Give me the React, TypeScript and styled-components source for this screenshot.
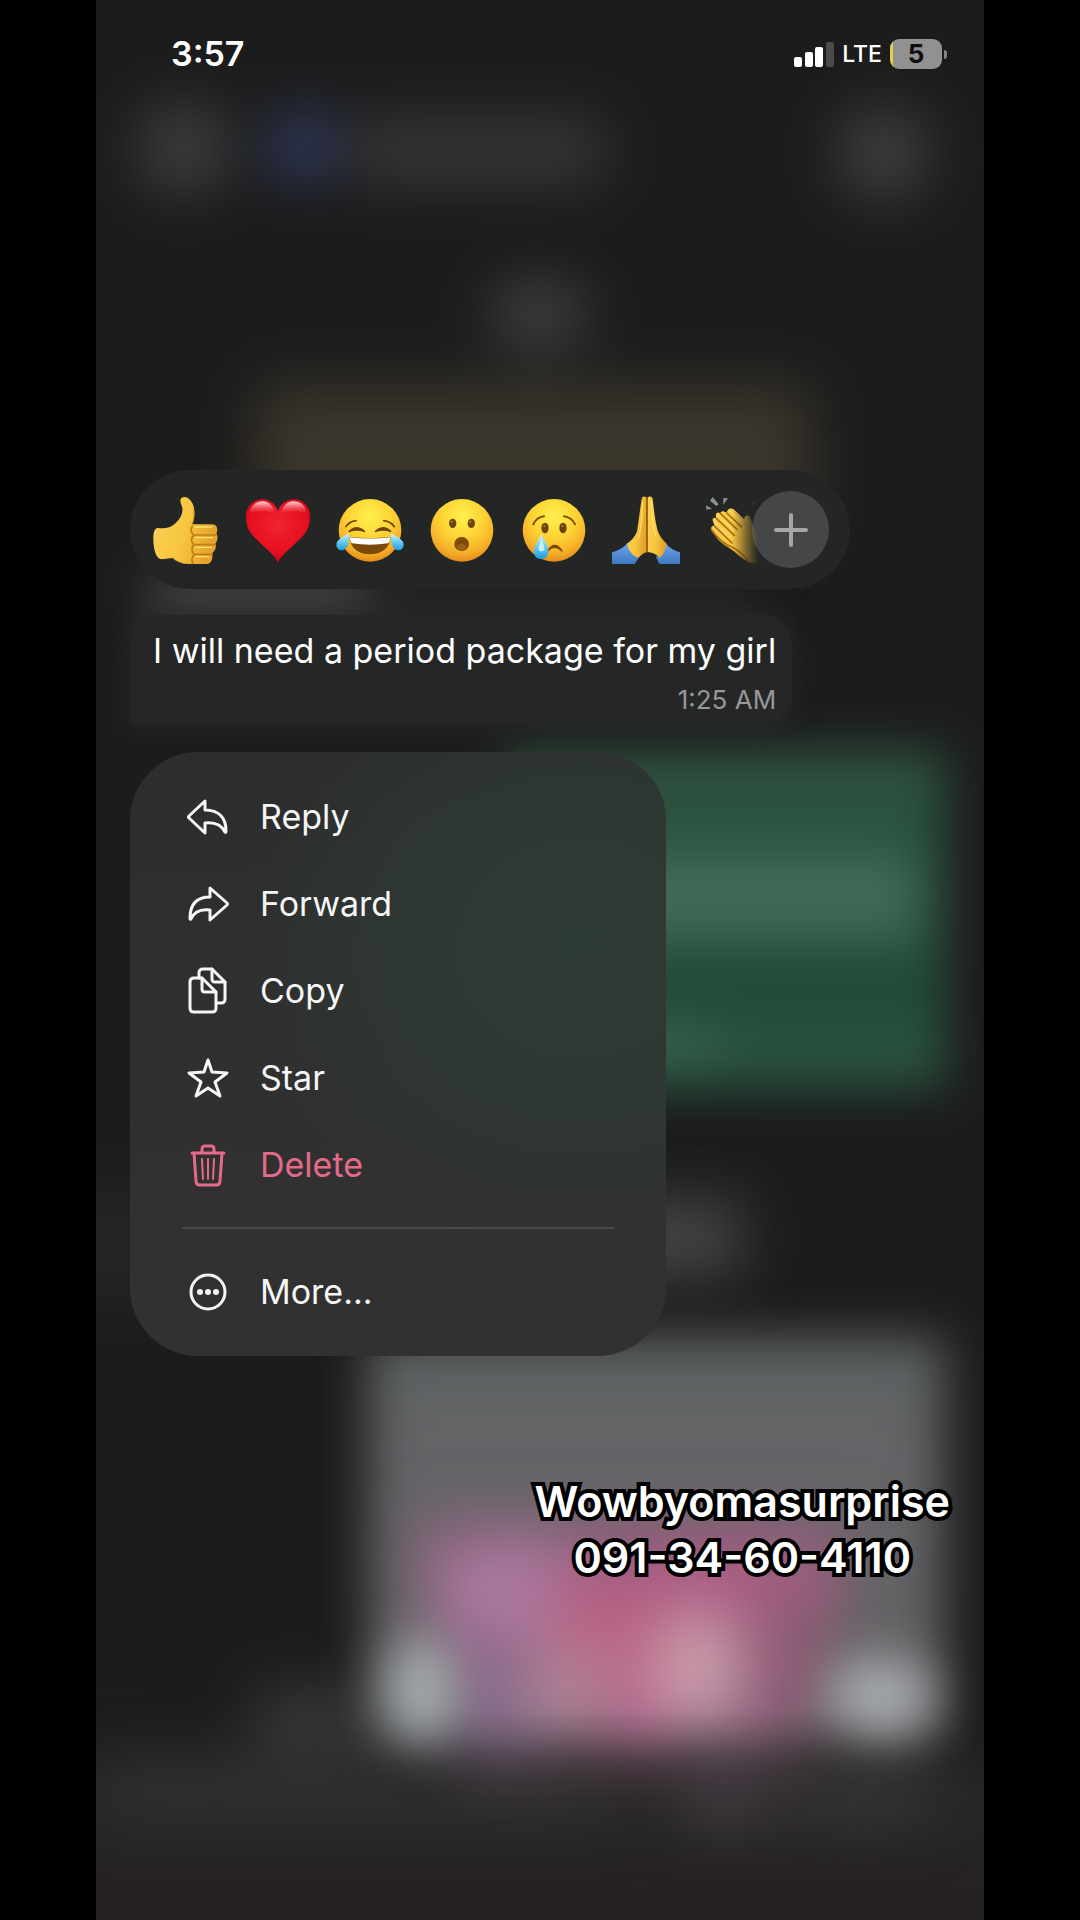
import React from "react";
import styled, { createGlobalStyle } from "styled-components";

const GlobalStyle = createGlobalStyle`
  * { box-sizing: border-box; }
  body {
    margin: 0;
    background: #000;
    color: #fff;
    font-family: Inter, "Liberation Sans", sans-serif;
  }
  button {
    appearance: none;
    border: 0;
    padding: 0;
    margin: 0;
    background: none;
    color: inherit;
    font: inherit;
    cursor: pointer;
  }
  p { margin: 0; }
`;

const Stage = styled.div`
  display: flex;
  justify-content: center;
  min-height: 100vh;
  background: #000;
`;

const Phone = styled.main`
  position: relative;
  isolation: isolate;
  display: flex;
  flex-direction: column;
  align-items: flex-start;
  width: 100%;
  max-width: 888px;
  min-height: 100vh;
  padding: 0 34px 80px;
  overflow: hidden;
  background: #1c1c1c;
`;

const Backdrop = styled.svg`
  position: absolute;
  inset: 0;
  z-index: -1;
  width: 100%;
  height: 100%;
`;

const StatusBar = styled.header`
  display: flex;
  align-items: center;
  justify-content: space-between;
  align-self: stretch;
  height: 108px;
  padding: 0 3px 0 41px;
`;

const Clock = styled.time`
  font-size: 34px;
  font-weight: 600;
  line-height: 40px;
`;

const Indicators = styled.div`
  display: flex;
  align-items: center;
  gap: 8px;
`;

const Network = styled.span`
  font-size: 23px;
  font-weight: 500;
  line-height: 30px;
`;

const Battery = styled.div`
  display: flex;
  align-items: center;
  gap: 2px;
`;

const BatteryBody = styled.div`
  display: grid;
  place-items: center;
  width: 52px;
  height: 30px;
  border-radius: 9px;
  background: linear-gradient(90deg, #e6cf48 3px, #919191 3px);
  color: #0c0c0c;
  font-size: 26px;
  font-weight: 700;
  line-height: 30px;
`;

const BatteryCap = styled.div`
  width: 3px;
  height: 9px;
  border-radius: 0 4px 4px 0;
  background: #858585;
`;

const ReactionBar = styled.div`
  display: flex;
  align-items: center;
  width: 100%;
  max-width: 720px;
  height: 119px;
  margin-top: 362px;
  padding: 0 21px 0 22px;
  border-radius: 60px;
  background: #232625;
`;

const ReactionList = styled.div`
  display: flex;
  flex: 1;
  gap: 24px;
  min-width: 0;
  overflow: hidden;
  mask-image: linear-gradient(90deg, #000 calc(100% - 28px), transparent calc(100% - 2px));
`;

const Reaction = styled.button`
  flex: none;
  width: 68px;
  height: 68px;

  svg {
    display: block;
    width: 68px;
    height: 68px;
  }
`;

const AddReaction = styled.button`
  display: grid;
  flex: none;
  place-items: center;
  width: 77px;
  height: 77px;
  margin-left: -8px;
  border-radius: 50%;
  background: #454648;
`;

const Bubble = styled.article`
  margin-top: 26px;
  padding: 12px 16px 10px 23px;
  border-radius: 30px 30px 30px 4px;
  background: #252727;
  box-shadow: 0 0 24px 6px rgba(40, 41, 41, 0.7);
`;

const MessageText = styled.p`
  font-size: 34px;
  line-height: 48px;
  white-space: nowrap;
`;

const MessageTime = styled.time`
  display: block;
  margin-top: 10px;
  color: #979898;
  font-size: 26px;
  line-height: 30px;
  text-align: right;
`;

const Menu = styled.nav`
  display: flex;
  flex-direction: column;
  width: 100%;
  max-width: 536px;
  margin-top: 27px;
  padding: 21px 0;
  border-radius: 68px;
  background:
    radial-gradient(ellipse 64% 50% at 84% 32%, #2f3c35 0%, rgba(46, 57, 52, 0.9) 45%, rgba(46, 52, 50, 0) 100%),
    linear-gradient(180deg, #2c2d2d, #313131 80%);
`;

const MenuItem = styled.button<{ $danger?: boolean }>`
  display: flex;
  align-items: center;
  gap: 29px;
  height: 87px;
  padding: 0 55px;
  color: ${(p) => (p.$danger ? "#e56a8a" : "#f6f6f6")};
  font-size: 34px;
  line-height: 44px;
  text-align: left;

  svg {
    flex: none;
    width: 46px;
    height: 48px;
    fill: none;
    stroke: currentColor;
    stroke-width: 3;
    stroke-linecap: round;
    stroke-linejoin: round;
  }
`;

const Divider = styled.hr`
  align-self: stretch;
  height: 2px;
  margin: 19px 52px;
  border: 0;
  background: #4a4a4a;
`;

const Caption = styled.p`
  align-self: flex-end;
  margin-top: 117px;
  color: #fff;
  font-size: 43px;
  font-weight: 600;
  line-height: 56px;
  text-align: center;
  paint-order: stroke fill;
  -webkit-text-stroke: 8px #000;
  stroke-linejoin: round;
`;

function BlurredChat() {
  return (
    <Backdrop viewBox="0 0 888 1920" preserveAspectRatio="xMidYMin slice" aria-hidden="true">
      <defs>
        <filter id="soft" x="-100%" y="-100%" width="300%" height="300%" colorInterpolationFilters="sRGB">
          <feGaussianBlur stdDeviation="24" />
        </filter>
        <filter id="wide" x="-100%" y="-100%" width="300%" height="300%" colorInterpolationFilters="sRGB">
          <feGaussianBlur stdDeviation="29" />
        </filter>
        <linearGradient id="floor" x1="0" y1="0" x2="0" y2="1">
          <stop offset="0" stopColor="#1c1c1c" stopOpacity="0" />
          <stop offset="0.45" stopColor="#282728" />
          <stop offset="1" stopColor="#252022" />
        </linearGradient>
        <linearGradient id="photo" x1="0" y1="0" x2="0" y2="1">
          <stop offset="0" stopColor="#5e6263" />
          <stop offset="0.4" stopColor="#656568" />
          <stop offset="1" stopColor="#606061" />
        </linearGradient>
      </defs>
      <rect width="888" height="1920" fill="#1c1c1c" />
      <rect y="1680" width="888" height="240" fill="url(#floor)" />

      <g filter="url(#wide)">
        <circle cx="88" cy="148" r="46" fill="#3f3f3f" />
        <circle cx="207" cy="146" r="36" fill="#313b62" />
        <rect x="255" y="118" width="255" height="66" rx="20" fill="#373737" />
        <circle cx="787" cy="153" r="46" fill="#404040" />
        <ellipse cx="443" cy="314" rx="50" ry="32" fill="#444" />
        <rect x="160" y="385" width="555" height="150" rx="16" fill="#3c372d" />
      </g>
      <g filter="url(#soft)">
        <rect x="52" y="575" width="220" height="50" fill="#484848" />
        <rect x="270" y="590" width="390" height="30" fill="#302b2b" />
      </g>

      <g filter="url(#soft)">
        <rect x="410" y="750" width="440" height="340" rx="10" fill="#2a523f" />
        <rect x="410" y="750" width="425" height="44" fill="#30533f" />
        <rect x="490" y="855" width="330" height="80" fill="#416b56" />
        <rect x="430" y="965" width="410" height="50" fill="#204a35" />
        <rect x="450" y="1028" width="170" height="34" fill="#3a644e" />
      </g>

      <g filter="url(#wide)">
        <rect x="380" y="1200" width="265" height="76" fill="#464646" />
        <rect x="-30" y="1190" width="90" height="110" fill="#262626" />
        <rect x="160" y="1690" width="110" height="60" fill="#3a3a3a" />
        <rect x="10" y="1765" width="500" height="54" fill="#303030" />
        <rect x="590" y="1760" width="80" height="64" fill="#413e42" />
        <rect x="700" y="1765" width="130" height="56" fill="#373638" />
      </g>

      <rect x="272" y="1338" width="576" height="404" rx="8" fill="url(#photo)" filter="url(#soft)" />
      <g filter="url(#wide)">
        <path d="M320 1522 H745 Q750 1620 690 1745 H360 Q335 1640 320 1522Z" fill="#92607f" />
        <ellipse cx="418" cy="1590" rx="84" ry="50" fill="#ab7a9f" />
        <ellipse cx="600" cy="1590" rx="145" ry="46" fill="#ad5c82" />
        <ellipse cx="510" cy="1640" rx="66" ry="42" fill="#ba6482" />
        <ellipse cx="405" cy="1700" rx="48" ry="58" fill="#866b8d" />
        <ellipse cx="690" cy="1660" rx="44" ry="78" fill="#8e5b75" />
        <ellipse cx="470" cy="1690" rx="42" ry="42" fill="#b28797" />
        <ellipse cx="545" cy="1712" rx="26" ry="40" fill="#c06a93" />
        <ellipse cx="603" cy="1668" rx="46" ry="60" fill="#c99dac" />
      </g>
      <g filter="url(#soft)">
        <ellipse cx="326" cy="1690" rx="34" ry="54" fill="#a8b0b2" />
        <ellipse cx="784" cy="1696" rx="54" ry="40" fill="#a7aaad" />
      </g>
      <rect x="360" y="1755" width="380" height="40" fill="#40363c" opacity="0.5" filter="url(#wide)" />
    </Backdrop>
  );
}

const SharedDefs = styled.svg`
  position: absolute;
  width: 0;
  height: 0;
`;

function EmojiDefs() {
  return (
    <SharedDefs aria-hidden="true">
      <defs>
        <radialGradient id="face" cx="0.5" cy="0.28" r="0.74">
          <stop offset="0" stopColor="#fff04f" />
          <stop offset="0.45" stopColor="#fdd535" />
          <stop offset="0.8" stopColor="#f6ae28" />
          <stop offset="1" stopColor="#df8716" />
        </radialGradient>
        <linearGradient id="skin" x1="0" y1="0" x2="1" y2="0.3">
          <stop offset="0" stopColor="#fdd257" />
          <stop offset="0.6" stopColor="#f7c53f" />
          <stop offset="1" stopColor="#e6a42c" />
        </linearGradient>
        <radialGradient id="heart" cx="0.5" cy="0.4" r="0.62">
          <stop offset="0" stopColor="#f02431" />
          <stop offset="0.7" stopColor="#e60f20" />
          <stop offset="1" stopColor="#c50415" />
        </radialGradient>
        <linearGradient id="gloss" x1="0" y1="0" x2="0" y2="1">
          <stop offset="0" stopColor="#fff" stopOpacity="0.85" />
          <stop offset="1" stopColor="#ff5a66" stopOpacity="0" />
        </linearGradient>
        <linearGradient id="tear" x1="0" y1="0" x2="0" y2="1">
          <stop offset="0" stopColor="#d4f6ff" />
          <stop offset="0.5" stopColor="#67cdf2" />
          <stop offset="1" stopColor="#2399d9" />
        </linearGradient>
        <linearGradient id="sleeve" x1="0" y1="0" x2="0" y2="1">
          <stop offset="0" stopColor="#6ba4e6" />
          <stop offset="1" stopColor="#3f78c4" />
        </linearGradient>
      </defs>
    </SharedDefs>
  );
}

function ThumbsUp() {
  return (
    <svg viewBox="96 105 204 204">
      <path d="M100 234 C100 212 105 200 114 201 C132 204 152 201 163 190 C178 176 190 160 187 140 C185 130 181 127 181 119 C181 107 195 105 205 112 C219 123 224 139 223 158 C223 171 219 181 217 190 H278 C292 191 295 207 289 218 C296 226 292 241 286 248 C290 257 287 268 277 276 C279 299 272 308 260 309 H217 C194 310 176 305 158 291 L125 295 C108 295 100 263 100 234Z" fill="url(#skin)" />
      <path d="M218 194 C211 204 211 215 222 222 C211 231 214 246 222 251 C213 259 214 274 223 280 C213 289 214 304 221 308" fill="none" stroke="#bf7c14" strokeWidth="5" />
      <path d="M222 222 H288 M222 251 H285 M223 280 H276" fill="none" stroke="#c17f18" strokeWidth="5" strokeLinecap="round" />
      <path d="M226 198 H276 M228 230 H278 M228 259 H275 M228 287 H266" fill="none" stroke="#ffe073" strokeWidth="4" strokeLinecap="round" />
      <path d="M158 291 C176 305 194 310 217 309 M217 188 C222 174 223 160 221 148" fill="none" stroke="#d99a28" strokeWidth="3" />
    </svg>
  );
}

function Heart() {
  return (
    <svg viewBox="371 105 204 204">
      <path d="M473 305 C462 281 430 258 402 229 C382 208 376 187 377 164 C379 132 402 114 427 115 C450 116 466 131 473 150 C480 131 496 116 519 115 C545 114 567 132 569 164 C570 187 564 208 544 229 C516 258 484 281 473 305Z" fill="url(#heart)" />
      <path d="M387 160 C390 132 408 121 427 121 C447 122 460 137 464 158 C450 149 400 147 387 160Z" fill="url(#gloss)" />
      <path d="M482 158 C486 137 499 122 519 121 C540 121 556 133 560 160 C545 147 496 149 482 158Z" fill="url(#gloss)" />
    </svg>
  );
}

function TearsOfJoy() {
  return (
    <svg viewBox="648 105 204 204">
      <circle cx="750" cy="208" r="94" fill="url(#face)" />
      <path d="M678 197 Q688 181 708 179 M823 197 Q812 181 791 179" fill="none" stroke="#6e4306" strokeWidth="5" strokeLinecap="round" />
      <path d="M688 211 Q709 190 733 211 Q709 203 688 211Z M767 211 Q791 190 812 211 Q791 203 767 211Z" fill="#6e4306" stroke="#6e4306" strokeWidth="5" strokeLinejoin="round" />
      <path d="M688 228 Q750 235 812 228 C809 262 784 280 750 280 C716 280 691 262 688 228Z" fill="#7b4a0a" />
      <path d="M689 229 Q750 236 811 229 Q810 244 804 247 Q750 255 696 247 Q690 243 689 229Z" fill="#fff" />
      <path d="M686 217 C690 245 681 268 664 268 C650 267 645 250 653 240 C660 231 674 226 686 217Z" fill="url(#tear)" />
      <path d="M814 217 C810 245 819 268 836 268 C850 267 855 250 847 240 C840 231 826 226 814 217Z" fill="url(#tear)" />
    </svg>
  );
}

function Surprised() {
  return (
    <svg viewBox="924 105 204 204">
      <circle cx="1026" cy="208" r="94" fill="url(#face)" />
      <ellipse cx="998" cy="187" rx="11" ry="14" fill="#70450c" />
      <ellipse cx="1054" cy="187" rx="11" ry="14" fill="#70450c" />
      <circle cx="995" cy="182" r="3" fill="#b0853e" />
      <circle cx="1051" cy="182" r="3" fill="#b0853e" />
      <ellipse cx="1025" cy="249" rx="22" ry="21" fill="#7c4c0d" />
      <path d="M1009 255 Q1025 240 1041 255 Q1036 268 1025 268 Q1014 268 1009 255Z" fill="#986014" />
    </svg>
  );
}

function Crying() {
  return (
    <svg viewBox="90 105 204 204">
      <circle cx="192" cy="208" r="94" fill="url(#face)" />
      <path d="M130 190 Q139 169 162 166 M222 166 Q245 169 255 190" fill="none" stroke="#825008" strokeWidth="6" strokeLinecap="round" />
      <ellipse cx="165" cy="201" rx="11" ry="16" fill="#6e4309" />
      <ellipse cx="219" cy="201" rx="11" ry="16" fill="#6e4309" />
      <circle cx="163" cy="195" r="3" fill="#b0853e" />
      <circle cx="217" cy="195" r="3" fill="#b0853e" />
      <path d="M173 270 Q194 236 216 270 Q194 248 173 270Z" fill="#764707" stroke="#764707" strokeWidth="4" strokeLinejoin="round" />
      <path d="M153 220 C160 237 176 252 175 272 C174 287 165 294 153 294 C141 294 132 286 132 272 C132 252 148 237 153 220Z" fill="url(#tear)" />
      <path d="M154 234 C159 248 165 258 163 268 Q154 276 146 267 C144 256 151 247 154 234Z" fill="#e1f8ff" opacity="0.8" />
    </svg>
  );
}

function PrayingHands() {
  return (
    <svg viewBox="366 107 204 204">
      <path d="M366 276 C388 270 400 262 412 249 L446 292 C440 302 436 307 434 311 H366Z" fill="url(#sleeve)" />
      <path d="M570 276 C549 270 538 262 527 249 L498 290 C503 300 505 306 509 311 H570Z" fill="url(#sleeve)" />
      <path d="M455 116 C456 107 468 106 470 115 V275 C463 276 453 285 446 292 C433 289 417 277 411 250 C426 240 436 228 441 213 C446 184 450 145 455 116Z" fill="url(#skin)" />
      <path d="M472 115 C474 106 486 107 488 116 C492 148 495 182 503 211 C509 227 517 238 530 250 C525 274 517 287 509 292 C500 281 485 276 472 275Z" fill="url(#skin)" />
      <path d="M471 112 V275" stroke="#9b600a" strokeWidth="5" strokeLinecap="round" />
      <path d="M458 125 C456 170 452 210 446 232 M484 125 C486 166 491 206 498 230" fill="none" stroke="#ffe06d" strokeWidth="4" strokeLinecap="round" />
    </svg>
  );
}

function Clapping() {
  return (
    <svg viewBox="640 105 204 204">
      <path d="M646 133 L665 143 L647 146Z M658 119 L666 108 L684 130 L677 135Z M698 111 L712 112 L698 131Z M783 128 L790 122 L792 134Z" fill="#8b8e90" />
      <path d="M662 205 C660 196 666 192 672 195 L668 184 C662 172 670 168 677 172 C672 158 680 151 689 157 C692 147 702 150 708 156 C710 141 722 139 731 146 L760 174 C764 160 776 161 780 174 C790 210 811 235 820 258 C824 281 817 300 803 306 C790 309 780 306 767 299 C748 289 733 272 717 262 C697 250 682 238 675 225 C668 217 664 212 662 205Z" fill="url(#skin)" />
      <path d="M672 196 L724 246 M677 172 L731 223 M689 157 L739 205 M708 156 L752 197 M663 207 Q690 247 728 260 Q755 276 775 303" fill="none" stroke="#ab6c13" strokeWidth="5" strokeLinecap="round" />
      <path d="M717 148 L757 184 M682 163 L729 210 M671 181 L720 231" fill="none" stroke="#ffe175" strokeWidth="3" strokeLinecap="round" />
    </svg>
  );
}

const reactions = [
  { label: "Thumbs up", Art: ThumbsUp },
  { label: "Red heart", Art: Heart },
  { label: "Tears of joy", Art: TearsOfJoy },
  { label: "Surprised", Art: Surprised },
  { label: "Crying", Art: Crying },
  { label: "Folded hands", Art: PrayingHands },
  { label: "Clapping hands", Art: Clapping },
];

const ReplyIcon = () => (
  <svg viewBox="0 0 46 48" aria-hidden="true">
    <path d="M20 8 L4 23 Q3 24 4 25 L20 40 V30 C29 29 36 31 40 39 Q41 40 41 38 C41 25 34 17 20 17Z" />
  </svg>
);

const ForwardIcon = () => (
  <svg viewBox="0 0 46 48" aria-hidden="true">
    <path d="M25 8 L42 23 Q43 24 42 25 L25 40 V30 C16 29 9 32 6 39 Q5 40 5 38 C5 25 11 17 25 17Z" />
  </svg>
);

const CopyIcon = () => (
  <svg viewBox="0 0 46 48" aria-hidden="true">
    <path d="M9 11 H17 L31 25 V41 Q31 45 27 45 H9 Q5 45 5 41 V15 Q5 11 9 11Z" />
    <path d="M17 11 V22 Q17 25 20 25 H31" />
    <path d="M14 11 V6 Q14 2 18 2 H27 L40 15 V32 Q40 36 36 36 H32" />
    <path d="M27 2 V12 Q27 15 30 15 H40" />
  </svg>
);

const StarIcon = () => (
  <svg viewBox="0 0 46 48" aria-hidden="true">
    <path d="M23 6 L27 18 L42 19 L30 28 L35 42 L23 34 L11 42 L16 28 L4 19 L19 18Z" />
  </svg>
);

const TrashIcon = () => (
  <svg viewBox="0 0 46 48" aria-hidden="true">
    <path d="M7 12 H39 M17 12 V8 Q17 5 20 5 H26 Q29 5 29 8 V12" />
    <path d="M9 12 L11 40 Q11 44 15 44 H31 Q35 44 35 40 L37 12" />
    <path d="M17 18 L18 38 M23 18 V38 M29 18 L28 38" strokeWidth="2" />
  </svg>
);

const MoreIcon = () => (
  <svg viewBox="0 0 46 48" aria-hidden="true">
    <circle cx="23" cy="24" r="17" />
    <g fill="currentColor" stroke="none">
      <circle cx="15" cy="24" r="3" />
      <circle cx="23" cy="24" r="3" />
      <circle cx="31" cy="24" r="3" />
    </g>
  </svg>
);

const actions = [
  { label: "Reply", Icon: ReplyIcon },
  { label: "Forward", Icon: ForwardIcon },
  { label: "Copy", Icon: CopyIcon },
  { label: "Star", Icon: StarIcon },
  { label: "Delete", Icon: TrashIcon, danger: true },
];

export default function App() {
  return (
    <Stage>
      <GlobalStyle />
      <EmojiDefs />
      <Phone>
        <BlurredChat />
        <StatusBar>
          <Clock>3:57</Clock>
          <Indicators>
            <svg width="40" height="25" viewBox="0 0 40 25" fill="#fff" aria-hidden="true">
              <rect x="0" y="15" width="8" height="10" rx="2" />
              <rect x="11" y="10" width="8" height="15" rx="2" />
              <rect x="21" y="5" width="8" height="20" rx="2" />
              <rect x="32" y="0" width="8" height="25" rx="2" fill="#4b4b4b" />
            </svg>
            <Network>LTE</Network>
            <Battery>
              <BatteryBody>5</BatteryBody>
              <BatteryCap />
            </Battery>
          </Indicators>
        </StatusBar>

        <ReactionBar>
          <ReactionList>
            {reactions.map(({ label, Art }) => (
              <Reaction key={label} type="button" aria-label={label}>
                <Art />
              </Reaction>
            ))}
          </ReactionList>
          <AddReaction type="button" aria-label="Add reaction">
            <svg width="36" height="36" viewBox="0 0 36 36" aria-hidden="true">
              <path d="M18 3 V33 M3 18 H33" stroke="#a6a6a8" strokeWidth="4" strokeLinecap="round" />
            </svg>
          </AddReaction>
        </ReactionBar>

        <Bubble>
          <MessageText>I will need a period package for my girl</MessageText>
          <MessageTime>1:25 AM</MessageTime>
        </Bubble>

        <Menu>
          {actions.map(({ label, Icon, danger }) => (
            <MenuItem key={label} type="button" $danger={danger}>
              <Icon />
              {label}
            </MenuItem>
          ))}
          <Divider />
          <MenuItem type="button">
            <MoreIcon />
            More...
          </MenuItem>
        </Menu>

        <Caption>
          Wowbyomasurprise
          <br />
          091-34-60-4110
        </Caption>
      </Phone>
    </Stage>
  );
}
